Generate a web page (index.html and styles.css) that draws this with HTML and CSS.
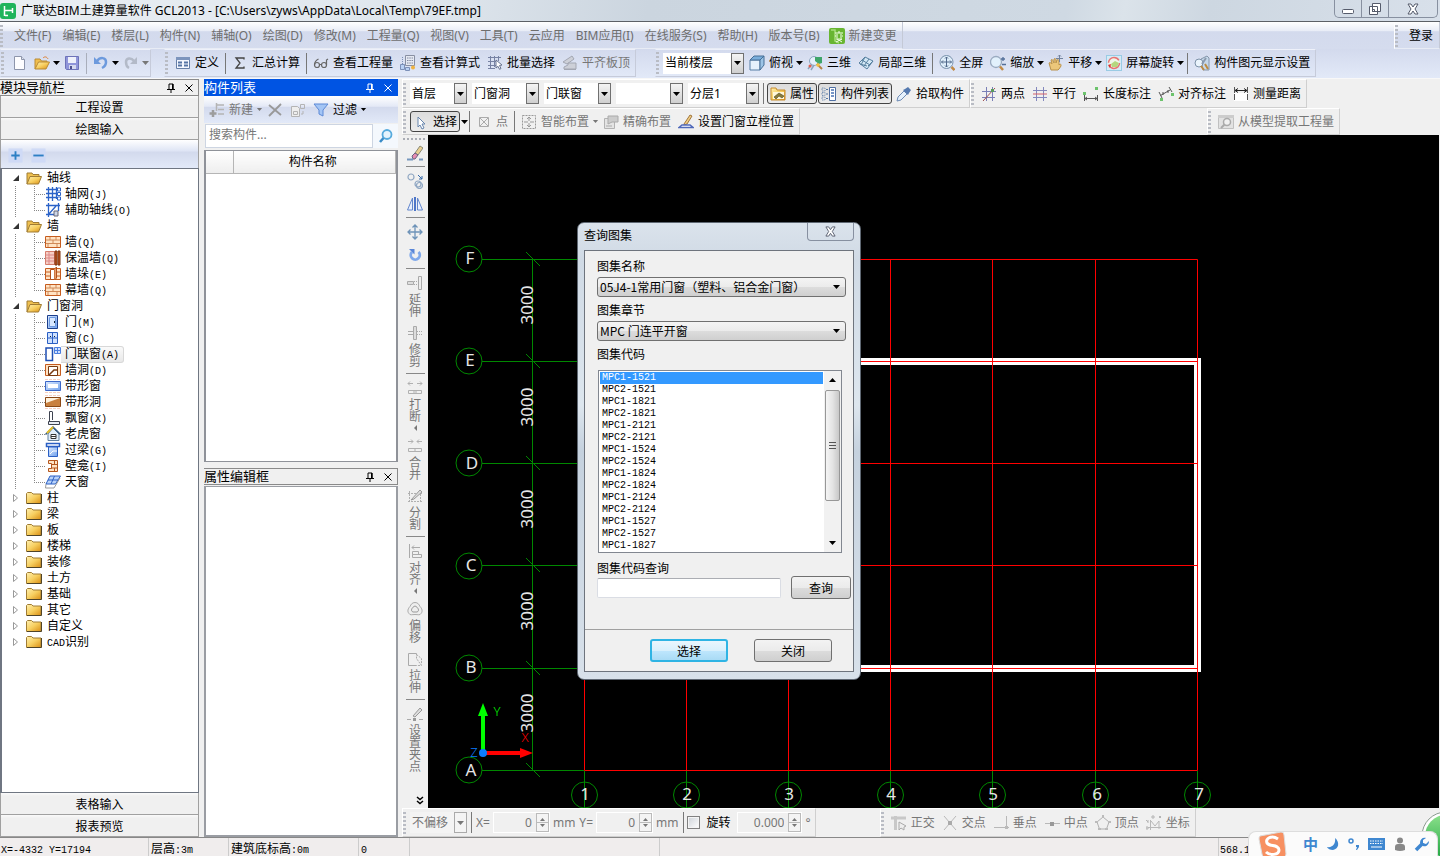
FILE: index.html
```html
<!DOCTYPE html>
<html lang="zh-CN">
<head>
<meta charset="utf-8">
<title>广联达BIM土建算量软件 GCL2013</title>
<link rel="stylesheet" href="styles.css">
</head>
<body>
<svg class="defs" aria-hidden="true">
  <defs>
    <linearGradient id="gold" x1="0" y1="0" x2="1" y2="1"><stop offset="0" stop-color="#fff0b0"/><stop offset=".5" stop-color="#f7cf60"/><stop offset="1" stop-color="#d98e14"/></linearGradient>
    <linearGradient id="blue" x1="0" y1="0" x2="1" y2="1"><stop offset="0" stop-color="#dcebff"/><stop offset="1" stop-color="#6fa0ec"/></linearGradient>
    <linearGradient id="ball" x1="0" y1="0" x2="0" y2="1"><stop offset="0" stop-color="#8be08b"/><stop offset="1" stop-color="#25a845"/></linearGradient>
  </defs>
  <symbol id="caret" viewBox="0 0 7 4"><path d="M0 0h7L3.500 4z" fill="currentColor"/></symbol>
  <symbol id="i-new" viewBox="0 0 16 16"><path d="M3.500 1.500h7l3 3v10h-10z" fill="#fdfdff" stroke="#8d95ab"/><path d="M10.500 1.500v3h3" fill="#dde3f0" stroke="#8d95ab"/></symbol>
  <symbol id="i-open" viewBox="0 0 16 16"><path d="M1 14V4h5l1.500 2H13v3" fill="#f0bf4d" stroke="#b98a35"/><path d="M1 14l3.500-7h11L12 14z" fill="url(#gold)" stroke="#b98a35"/><path d="M9 3c2-2 4-1 5 1" fill="none" stroke="#e08030"/></symbol>
  <symbol id="i-save" viewBox="0 0 16 16"><path d="M1.500 1.500h13v13h-12l-1-1z" fill="#8f95da" stroke="#6d73b8"/><path d="M4 2h8v6H4z" fill="#eef1fb"/><path d="M5 10h7v4H5z" fill="#d5d9ee"/><path d="M6 11h2v3H6z" fill="#4c518f"/></symbol>
  <symbol id="i-undo" viewBox="0 0 16 16"><path d="M4 6c3-4 9-4 9 1 0 3-2 5-4 6" fill="none" stroke="#6d9add" stroke-width="2.500"/><path d="M1 2v7h7z" fill="#6d9add"/></symbol>
  <symbol id="i-redo" viewBox="0 0 16 16"><path d="M11 6C8 2 3 3 3 7c0 3 1 5 3 6" fill="none" stroke="#b3bac8" stroke-width="2.500"/><path d="M14 2v7H7z" fill="#b3bac8"/></symbol>
  <symbol id="i-define" viewBox="0 0 16 16"><path d="M1.500 2.500h13v11h-13z" fill="#f4f7ff" stroke="#6780a8"/><path d="M1 2h14v3H1z" fill="#7d95bd"/><path d="M3 7.500h4M3 10.500h4M9 7.500h4M9 10.500h4" stroke="#5574a5" stroke-width="2"/></symbol>
  <symbol id="i-sum" viewBox="0 0 16 16"><path d="M12 4.500V3H4l4 5-4 5h8v-1.500" fill="none" stroke="#444" stroke-width="1.300"/></symbol>
  <symbol id="i-glasses" viewBox="0 0 16 16"><g fill="none" stroke="#666" stroke-width="1.200"><circle cx="4" cy="10" r="2.500"/><circle cx="11" cy="10" r="2.500"/><path d="M6.500 9.500h2M1.500 10c0-3 2-5 4-6M13.500 10V5l1.500-1"/></g></symbol>
  <symbol id="i-calc" viewBox="0 0 16 16"><path d="M5.500.5h9v10h-9z" fill="#e5e9f2" stroke="#888fa2"/><path d="M7 3h6M7 5.500h6M7 8h6" stroke="#8088a0" stroke-dasharray="1.500 .8"/><path d="M2.500 2v7" stroke="#7c90b8" stroke-dasharray="1 1"/><path d="M.5 9.500h4v5h-4zM5.500 12.500h4v3h-4z" fill="#b9d1f4" stroke="#7c90b8"/><circle cx="13" cy="12.500" r="2" fill="#efb342"/></symbol>
  <symbol id="i-batch" viewBox="0 0 16 16"><path d="M1 2.500h13M1 6.500h9M1 10.500h8M3.500 1v12M7.500 1v11M1 13.500h7M11.500 1v5" fill="none" stroke="#7782a3"/><path d="M9 5l6 5-2.500.5 1.500 3-1.500.8-1.500-3L9 13z" fill="#fff" stroke="#687390"/></symbol>
  <symbol id="i-flush" viewBox="0 0 16 16"><path d="M2 14.500h12M2 12l4-2V8h8v6H2zM1 7l9-6 2 3-7 5z" fill="#cdd0d8" stroke="#a3a7b2"/></symbol>
  <symbol id="i-cube" viewBox="0 0 16 16"><path d="M1 5h10v10H1z" fill="#e6f2fc" stroke="#567fa5"/><path d="M1 5l4-4h10l-4 4z" fill="#7aaedb" stroke="#466f96"/><path d="M11 5l4-4v9l-4 5z" fill="#9cc4e6" stroke="#466f96"/></symbol>
  <symbol id="i-orbit" viewBox="0 0 16 16"><circle cx="7" cy="6" r="4.500" fill="#e4f0fa" stroke="#8ba4bd"/><path d="M8 2h7v6l-3 1-4-3z" fill="#3fa56a"/><path d="M10 9l5 5" stroke="#b48345" stroke-width="2"/><path d="M1 14l4-5M4 15l3-5" stroke="#8ba4bd" stroke-width="1.500"/><circle cx="3" cy="11" r="1.500" fill="#e06050"/><circle cx="11" cy="10" r="1.800" fill="#f0c03d"/></symbol>
  <symbol id="i-local3d" viewBox="0 0 16 16"><path d="M1 8l6-6 8 4-6 8z" fill="#d4e8f6" stroke="#57809f"/><path d="M4 5l8 5M7 2L3 10M11 4l-5 7M15 6l-5 5M2 9l7 2" fill="none" stroke="#57809f"/></symbol>
  <symbol id="i-full" viewBox="0 0 16 16"><circle cx="7.500" cy="7" r="6.500" fill="#dfeefa" stroke="#7890aa"/><path d="M7.500 2v10M2.500 7h10M6 3.500L7.500 2 9 3.500M6 10.500L7.500 12 9 10.500M4 5.500L2.500 7 4 8.500M11 5.500L12.500 7 11 8.500" fill="none" stroke="#50688a"/><path d="M12.500 12l3 3" stroke="#c18a45" stroke-width="2.500"/></symbol>
  <symbol id="i-zoom" viewBox="0 0 16 16"><circle cx="6" cy="7" r="5.500" fill="#e2f1fc" stroke="#9aabc0" stroke-width="1.300"/><path d="M10 11.500l3 3.500" stroke="#c18a45" stroke-width="2.500"/><path d="M11 4h4M13 2v4M12 9.500h4" stroke="#536f99" stroke-width="1.300"/></symbol>
  <symbol id="i-hand" viewBox="0 0 16 16"><path d="M3 15L1 8c1-1 2 0 3 1L3 5c1-1 2 0 2 1l1 2V4c1-1 2 0 2 1v3l1-3c1-1 2 0 2 1v4l1-1c1 0 1 1 1 2l-2 3-1 1z" fill="#ecc77a" stroke="#b9924c"/><path d="M11.500 0v7M8 3.500h7M10 1.500L11.500 0 13 1.500" fill="none" stroke="#72839f"/></symbol>
  <symbol id="i-rotscr" viewBox="0 0 16 16"><rect x=".5" y=".5" width="15" height="15" fill="#d5ebf6" stroke="#9acbe4"/><circle cx="8" cy="8" r="5.500" fill="#eff6ea" stroke="#e87474" stroke-width="1.500" stroke-dasharray="14 3"/><path d="M5 9l4-3 4 2-2 4H6z" fill="#b5d77f"/><path d="M2 10l3-1-1 4z" fill="#d33"/></symbol>
  <symbol id="i-display" viewBox="0 0 16 16"><path d="M7 4l6-3 2 2v12H9z" fill="#c6d8ea" stroke="#8596aa"/><circle cx="5" cy="8" r="4" fill="#eaf4fc" stroke="#7d91a8"/><path d="M12 3L8 9" stroke="#8b9aae" stroke-width="2"/><path d="M7 11l3 4M11 9l3 5" stroke="#bd8b40" stroke-width="2"/></symbol>
  <symbol id="i-change" viewBox="0 0 16 16"><rect width="16" height="16" rx="2" fill="#68b532"/><path d="M2 2h4v11l4 2" fill="none" stroke="#a7dd7c" stroke-width="1.500"/><path d="M6 5h8M10 3v2M8 6v4M12 6v4M6 8h1M13 8h1M7 11h6l-6 3M8 11l5 3" fill="none" stroke="#f3ffe9"/></symbol>
  <symbol id="i-prop" viewBox="0 0 16 16"><path d="M1 14V2h5l1 2h8v10z" fill="url(#gold)" stroke="#c68a2c"/><path d="M3 6h11v7H3z" fill="#fff7d9"/><path d="M4 11l5-4 5 3-2 2-3-2-3 3z" fill="#8b7b36" stroke="#4b4b2b" stroke-width=".6"/></symbol>
  <symbol id="i-list" viewBox="0 0 16 16"><path d="M1 2h3v3H1zM1 6.500h3v3H1zM1 11h3v3H1z" fill="none" stroke="#7a94b5" stroke-dasharray="1.500 1"/><path d="M5 3.500h2M5 8h2M5 12.500h2" stroke="#53759f"/><path d="M8.500 1.500h6v13h-6z" fill="#fff" stroke="#4f6fa2"/><path d="M10 4h3M10 7h3M10 10h3" stroke="#4973b4" stroke-width="1.500"/></symbol>
  <symbol id="i-pick" viewBox="0 0 16 16"><path d="M1 15l1-4 6-6 3 3-6 6z" fill="#e5f0fb" stroke="#6d8bb5"/><path d="M7 4l5 5 1-2 2-3-3-3-3 2z" fill="#5579af"/></symbol>
  <symbol id="i-twopt" viewBox="0 0 16 16"><path d="M1 5.500h14M1 11.500h13M5.500 1v14M11.500 1v14" stroke="#7a7fb6"/><path d="M2 15L14 2" stroke="#a05050"/><path d="M10 3h3v3h-3z" fill="#5a9a5a"/></symbol>
  <symbol id="i-parallel" viewBox="0 0 16 16"><path d="M1 4.500h14M1 11.500h14M4.500 1v14M11.500 1v14" stroke="#8488bd"/><path d="M1 8h14" stroke="#d2606a"/></symbol>
  <symbol id="i-length" viewBox="0 0 16 16"><path d="M1.500 9v6M14.500 9v6M2 12.500h12M4 11l-2 1.500L4 14M12 11l2 1.500-2 1.500" fill="none" stroke="#555"/><path d="M0 6h3v3H0zM12 1h3v3h-3z" fill="#6cc36c"/></symbol>
  <symbol id="i-align" viewBox="0 0 16 16"><path d="M1 6l3 6M11 1l3 5M2.500 9.500L12 4M5 6v3M10 4v3" fill="none" stroke="#555"/><path d="M2 12h3v3H2zM13 7h3v3h-3z" fill="#6cc36c"/></symbol>
  <symbol id="i-measure" viewBox="0 0 16 16"><path d="M1 7h14v8H1z" fill="#fff"/><path d="M1.500 1v14M14.500 1v14" stroke="#555" stroke-dasharray="6 1"/><path d="M2 4.500h12M5 2.500l-3 2 3 2M11 2.500l3 2-3 2" fill="none" stroke="#222"/></symbol>
  <symbol id="i-cursor" viewBox="0 0 16 16"><path d="M5 3v10l2-2 2 4 2-1-2-4h3z" fill="#fff" stroke="#6685ad"/></symbol>
  <symbol id="i-point" viewBox="0 0 16 16"><path d="M3.500 3.500h9v9h-9zM4 4l8 8M12 4l-8 8" fill="none" stroke="#aaa"/></symbol>
  <symbol id="i-smart" viewBox="0 0 16 16"><rect x="1.500" y="1.500" width="13" height="13" fill="none" stroke="#999" stroke-dasharray="2 1"/><path d="M8 3v4M8 9v4M3 8h4M9 8h4M6 5l2-2 2 2M6 11l2 2 2-2" fill="none" stroke="#999"/></symbol>
  <symbol id="i-exact" viewBox="0 0 16 16"><path d="M1.500 4.500h10v10h-10z" fill="#e4e4e4" stroke="#b2b2b2"/><path d="M5 2h10v6H9L5 10z" fill="#ccc" stroke="#aaa"/><path d="M3 12h6" stroke="#aaa"/></symbol>
  <symbol id="i-pen" viewBox="0 0 16 16"><path d="M6 10L12 1l2 1-5 8-3 1z" fill="#f1cf83" stroke="#a0743c"/><path d="M1 13.500L4 11h8l3 2.500z" fill="#fff" stroke="#4f69ba" stroke-width="1.500"/></symbol>
  <symbol id="i-extract" viewBox="0 0 16 16"><path d="M.5 1.500h15v13H.5z" fill="#e2e2e2" stroke="#c0c0c0"/><path d="M0 1h16v3H0z" fill="#ccc"/><circle cx="9" cy="8" r="3.500" fill="#f0f0f0" stroke="#aaa" stroke-width="1.500"/><path d="M6.500 10.500L3 14" stroke="#aaa" stroke-width="2"/></symbol>
  <symbol id="i-plus" viewBox="0 0 16 16"><path d="M.5.5h15v15H.5z" fill="#cfdaf6"/><path d="M8 3.500v9M3.500 8h9" stroke="#2d7fc4" stroke-width="2"/></symbol>
  <symbol id="i-minus" viewBox="0 0 16 16"><path d="M.5.5h15v15H.5z" fill="#cfdaf6"/><path d="M2.500 8h11" stroke="#2d7fc4" stroke-width="2"/></symbol>
  <symbol id="i-add" viewBox="0 0 16 16"><path d="M7 3h8M9 7.500h6M9 12h6M7.500 1v8" stroke="#b4b4b4" stroke-width="1.500"/><path d="M4 8v7M.5 11.500h7" stroke="#9d9d9d" stroke-width="2.500"/></symbol>
  <symbol id="i-del" viewBox="0 0 16 16"><path d="M2 3l12 10M14 2L2 14" stroke="#999" stroke-width="1.800"/></symbol>
  <symbol id="i-copy" viewBox="0 0 16 16"><path d="M1.500 4.500h6l2 2v8h-8z" fill="#eee" stroke="#b4b4b4"/><path d="M3.500 9.500h4v3h-4zM10.500 2.500h4v4h-4zM13 9v3h-2" fill="none" stroke="#b4b4b4"/></symbol>
  <symbol id="i-filter" viewBox="0 0 16 16"><path d="M1 2h14L10 8v6l-4-2V8z" fill="#a3c5f5" stroke="#5c89d6"/></symbol>
  <symbol id="i-search" viewBox="0 0 16 16"><circle cx="9" cy="6.500" r="4.500" fill="#e4f3fd" stroke="#55aadd" stroke-width="1.800"/><path d="M5.500 10L2 14" stroke="#3a8cc8" stroke-width="2.500"/></symbol>
  <symbol id="i-pin" viewBox="0 0 10 10"><path d="M3 1h4v5M3 1v5M1 6.500h8M5 7v3" fill="none" stroke="currentColor"/><path d="M6 1h1.500v5H6z" fill="currentColor"/></symbol>
  <symbol id="i-x" viewBox="0 0 10 10"><path d="M1.500 1.500l7 7M8.500 1.500l-7 7" stroke="currentColor" fill="none"/></symbol>
  <symbol id="i-exp" viewBox="0 0 8 8"><path d="M7 1v6H1z" fill="#333"/></symbol>
  <symbol id="i-col" viewBox="0 0 8 8"><path d="M1.500.5v7l4-3.500z" fill="#fff" stroke="#999"/></symbol>
  <symbol id="i-fopen" viewBox="0 0 16 14"><path d="M1 13V2h5l1 1.500h6V7" fill="#efc04f" stroke="#a07c34"/><path d="M1 13l3-7.500h11.500L12.500 13z" fill="url(#gold)" stroke="#a07c34"/></symbol>
  <symbol id="i-fold" viewBox="0 0 16 14"><path d="M.5 12.500v-10l1-1h4l1.500 1.500h8v9.500z" fill="url(#gold)" stroke="#a07c34"/><path d="M15.500 3v9.500H1" fill="none" stroke="#504428"/></symbol>
  <symbol id="t-grid" viewBox="0 0 16 16"><path d="M1 3.500h10M1 7.500h10M1 11.500h10M3.500 1v14M7.500 1v14M11.500 1v12" stroke="#2a62c8" stroke-width="1.300"/><path d="M12.500 2h3v3h-3zM12.500 6.500h3v3h-3zM12.500 11h3v3h-3z" fill="#fff" stroke="#2a62c8"/></symbol>
  <symbol id="t-aux" viewBox="0 0 16 16"><path d="M1 3.500h14M1 12.500h9M3.500 1v14M13.500 1v8M3 13l8-9" stroke="#2a62c8" stroke-width="1.300"/><path d="M9 9h4v5H9z" fill="#ccd6e8" stroke="#667"/></symbol>
  <symbol id="t-wall" viewBox="0 0 16 16"><path d="M.5 2.500h15v11H.5z" fill="#ffe3c4" stroke="#c65c1e"/><path d="M1 6h14M1 9.500h14M5 3v3M11 3v3M8 6v4M3 10v3M12 10v3" stroke="#d08a58"/></symbol>
  <symbol id="t-ins" viewBox="0 0 16 16"><path d="M.5 1.500h9v13h-9z" fill="#f6cfc6" stroke="#d67d6d"/><path d="M1 5h8M1 8h8M1 11h8M4 2v12" stroke="#d88"/><path d="M10 1h2v14h-2zM13 1h2v14h-2z" fill="#c55820" stroke="#7d3410"/></symbol>
  <symbol id="t-pier" viewBox="0 0 16 16"><path d="M.5 2.500h15v11H.5zM1 6h14M1 10h14" fill="#ffe3c4" stroke="#c65c1e"/><path d="M5.500 3.500h4v10h-4z" fill="#fff" stroke="#b14f1a"/><path d="M9.500 3l2-2v11l-2 2" fill="#e89f6c" stroke="#b14f1a"/></symbol>
  <symbol id="t-door" viewBox="0 0 16 16"><path d="M2.500 1.500h10v13h-10z" fill="url(#blue)" stroke="#1b3e8c"/><path d="M4.500 3.500h6v9h-6z" fill="#d8e8ff" stroke="#6c98e0"/><path d="M9.500 7v2" stroke="#123"/></symbol>
  <symbol id="t-win" viewBox="0 0 16 16"><path d="M2.500 2.500h10v11h-10zM7.500 3v10M3 8h10" fill="#cfe2ff" stroke="#2a5fc4"/><path d="M5 6.500h1M9 6.500h1" stroke="#123"/></symbol>
  <symbol id="t-dw" viewBox="0 0 16 16"><path d="M1 2h6.500v12.500H1z" fill="#fff" stroke="#1f4fb4" stroke-width="1.500"/><path d="M9.500 1.500h6v6h-6zM12.500 2v5M10 4.500h5" fill="#cfe0ff" stroke="#4a7fe0"/></symbol>
  <symbol id="t-hole" viewBox="0 0 16 16"><path d="M.5 2.500h15v11H.5z" fill="#ffe3c4" stroke="#c65c1e"/><path d="M3.500 4.500h9v9h-9z" fill="#fff" stroke="#7a3a10"/><path d="M4 13l5-5 3 0" fill="none" stroke="#7a3a10" stroke-width="1.500"/></symbol>
  <symbol id="t-band" viewBox="0 0 16 16"><path d="M.5 3.500h15v9H.5z" fill="url(#blue)" stroke="#3c68c8"/><path d="M3 6h10v4H3z" fill="#fff"/><path d="M0 1.500h16M0 14.500h16" stroke="#f8cfc0" stroke-dasharray="3 1"/></symbol>
  <symbol id="t-bandh" viewBox="0 0 16 16"><path d="M.5 3.500h15v9H.5z" fill="#c9803f" stroke="#8a4816"/><path d="M1 9l14-5H1z" fill="#fff2dd"/><path d="M0 1.500h16M0 14.500h16" stroke="#f8cfc0" stroke-dasharray="3 1"/></symbol>
  <symbol id="t-bay" viewBox="0 0 16 16"><path d="M7.500 1.500h-3v10M7.500 2v8" fill="none" stroke="#3e4350"/><path d="M3.500 11.500h11v3h-11z" fill="#e9edf4" stroke="#3e4350"/></symbol>
  <symbol id="t-dormer" viewBox="0 0 16 16"><path d="M3 8v6.500h11V8L8 2z" fill="#e2eefa" stroke="#5f7f9f"/><path d="M.5 8.500L8 1l7.500 7.500" fill="none" stroke="#375b80" stroke-width="1.500"/><path d="M2 7l6-6" stroke="#e4bd28" stroke-width="2"/><path d="M6 8.500h5v4H6zM6 10.500h5" fill="#fff" stroke="#333"/></symbol>
  <symbol id="t-lintel" viewBox="0 0 16 16"><path d="M1.500 1.500h13v3h-13z" fill="#fff" stroke="#2a5fc4" stroke-width="1.500"/><path d="M3.500 5h9v9.500h-9z" fill="url(#blue)" stroke="#2a5fc4"/><path d="M5 12l3-3h4" fill="none" stroke="#fff"/></symbol>
  <symbol id="t-niche" viewBox="0 0 16 16"><path d="M3.500 2.500h9v11h-9v-3h3v-5h-3zM9.500 3v3M6 6.500h7M6 10h7M9.500 10v3" fill="#ffe3c4" stroke="#b4551c"/></symbol>
  <symbol id="t-sky" viewBox="0 0 16 16"><path d="M5 2h10.500l-5 8H1z" fill="#b9d3fa" stroke="#2a5fc4"/><path d="M9.500 2L6 10M3 6h10" stroke="#2a5fc4"/><path d="M1 10l-.5 4H9l6-10" fill="none" stroke="#999"/></symbol>
  <symbol id="v-erase" viewBox="0 0 16 16"><path d="M8 8l5-7 3 2-5 7z" fill="#e9cf90" stroke="#8a8a75"/><path d="M5 11l3-3 3 2-3 4H6z" fill="#e68cb0" stroke="#6b6180"/><path d="M0 14.500h6M12 14.500h4" stroke="#7697be" stroke-width="2"/></symbol>
  <symbol id="v-copy" viewBox="0 0 16 16"><g fill="none" stroke="#8fa6c2" stroke-width="1.200"><circle cx="4" cy="4" r="3"/><circle cx="11" cy="11" r="3"/><circle cx="12.500" cy="12.500" r="3"/></g><path d="M11 2l4 4M15 3v3h-3" fill="none" stroke="#3468a8"/></symbol>
  <symbol id="v-mirror" viewBox="0 0 16 16"><path d="M5.500 2v12h-5zM10.500 2v12h5z" fill="#e8f0ff" stroke="#6286cc"/><path d="M7.500 1v14M8.500 1v14" stroke="#4e76c8"/></symbol>
  <symbol id="v-move" viewBox="0 0 16 16"><path d="M8 1.500v13M1.500 8h13M5.500 3.500L8 1l2.500 2.500M5.500 12.500L8 15l2.500-2.500M3.500 5.500L1 8l2.500 2.500M12.500 5.500L15 8l-2.500 2.500" fill="none" stroke="#6e93b8" stroke-width="1.300"/></symbol>
  <symbol id="v-rotate" viewBox="0 0 16 16"><path d="M5 5a4.500 4.500 0 1 0 6.500 0" fill="none" stroke="#7fa8ea" stroke-width="2.800"/><path d="M2 2h5.500v5.500z" fill="#5986d8"/></symbol>
  <symbol id="v-extend" viewBox="0 0 16 16"><path d="M.5 6.500h6v3h-6z" fill="#ddd" stroke="#aaa"/><path d="M7 6.500h4M7 9.500h4" stroke="#aaa" stroke-dasharray="1 1"/><path d="M11.500 1.500h3v13h-3z" fill="#eee" stroke="#aaa"/></symbol>
  <symbol id="v-trim" viewBox="0 0 16 16"><path d="M1 6.500h6M1 9.500h6" stroke="#aaa"/><path d="M10 6.500h5M10 9.500h5" stroke="#aaa" stroke-dasharray="1 1"/><path d="M6.500 1.500h3v13h-3z" fill="#ddd" stroke="#aaa"/></symbol>
  <symbol id="v-break" viewBox="0 0 16 16"><path d="M1 3.500h5M3 1.500l-2 2 2 2M10 3.500h5M13 1.500l2 2-2 2M1.500 10.500h13v3h-13zM7 10v4M9 10v4" fill="none" stroke="#b0b0b0"/></symbol>
  <symbol id="v-merge" viewBox="0 0 16 16"><path d="M1 3.500h5M4 1.500l2 2-2 2M10 3.500h5M12 1.500l-2 2 2 2M1.500 10.500h13v3h-13zM8 10v4" fill="none" stroke="#b0b0b0"/></symbol>
  <symbol id="v-split" viewBox="0 0 16 16"><path d="M1 5.500h14M1 13.500h14M2.500 3v12M13.500 3v12" stroke="#b0b0b0" stroke-dasharray="2 1"/><path d="M4 12L13 2l2 2-8 7z" fill="#ddd" stroke="#999"/></symbol>
  <symbol id="v-align" viewBox="0 0 16 16"><path d="M2.500 1v14M5 4.500h8M7 2.500l-2 2 2 2M5.500 8.500h6v3h-6zM5.500 11.500h9v3h-9z" fill="none" stroke="#aaa"/></symbol>
  <symbol id="v-offset" viewBox="0 0 16 16"><path d="M8 1.500c3 0 4 2 5 4 2 2 3 5 1 7-1 2-3 1-6 1s-5 1-6-1c-2-2-1-5 1-7 1-2 2-4 5-4z" fill="#eee" stroke="#aaa"/><path d="M8 5c3 1 5 5 2 6H6C3 10 5 6 8 5z" fill="none" stroke="#999"/></symbol>
  <symbol id="v-stretch" viewBox="0 0 16 16"><path d="M9.500 2.500h-8v12h8" fill="none" stroke="#aaa"/><path d="M9.500 2.500v5l5 7h-5M9.500 3.500l5 4v6" fill="none" stroke="#aaa" stroke-dasharray="2 1"/></symbol>
  <symbol id="v-grip" viewBox="0 0 16 16"><path d="M6 10l7-8 2 2-7 7z" fill="#ddd" stroke="#999"/><path d="M0 13.500h4M12 13.500h4" stroke="#aaa"/><path d="M6 12h3v3H6z" fill="#999"/></symbol>
  <symbol id="s-ortho" viewBox="0 0 16 16"><path d="M0 3h15M4.500 1v14" stroke="#c8c8c8" stroke-width="3"/><path d="M8 7v8l2-2 3 2 0-3 2-1z" fill="#eee" stroke="#aaa"/></symbol>
  <symbol id="s-cross" viewBox="0 0 16 16"><path d="M2 1l12 14M14 1L2 15" stroke="#b8b8b8"/><path d="M6 6h4v4H6z" fill="#aaa"/></symbol>
  <symbol id="s-perp" viewBox="0 0 16 16"><path d="M1 12.500h15M13.500 1v13" stroke="#b8b8b8"/><path d="M12 11h3v3h-3z" fill="#bbb"/></symbol>
  <symbol id="s-mid" viewBox="0 0 16 16"><path d="M1 8.500h15" stroke="#b8b8b8"/><path d="M6 7h4v4H6z" fill="#999"/></symbol>
  <symbol id="s-vert" viewBox="0 0 16 16"><path d="M8 2l6 5-2.500 7h-7L2 7z" fill="none" stroke="#b0b0b0"/><path d="M7 0h2v3H7zM0 6h3v2H0zM13 6h3v2h-3zM3 13h3v2H3zM10 13h3v2h-3z" fill="#bbb"/></symbol>
  <symbol id="s-coord" viewBox="0 0 16 16"><path d="M4.500 5v10M2 12.500h13M5 6l4 5 4-5v8" fill="none" stroke="#b8b8b8"/><path d="M0 5l2 2M2 5v3M0 12h2v2H0zM6 1h2v2H6zM13 1l2 2M15 1l-2 2" fill="none" stroke="#b4b4b4"/></symbol>
</svg>

<div class="app">
  <header class="titlebar">
    <svg class="logo" viewBox="0 0 16 16"><rect width="16" height="16" rx="3" fill="#1fb45c"/><path d="M4.500 3v10M5 7.500h7M5 12.500h3M12.500 5v5" fill="none" stroke="#fff" stroke-width="1.500"/></svg>
    <h1>广联达BIM土建算量软件 GCL2013 - [C:\Users\zyws\AppData\Local\Temp\79EF.tmp]</h1>
    <div class="winbtns">
      <button type="button" aria-label="最小化"><svg viewBox="0 0 14 14" width="14" height="14"><rect x="1.500" y="7.500" width="11" height="4" rx="1" fill="#fff" stroke="#555b6b"/></svg></button>
      <button type="button" aria-label="还原"><svg viewBox="0 0 14 14" width="14" height="14"><path d="M4.500 1.500h8v8h-8zM1.500 4.500h8v8h-8z" fill="#fff" stroke="#555b6b"/><path d="M4.500 7.500h2v2h-2z" fill="none" stroke="#555b6b"/></svg></button>
      <button type="button" aria-label="关闭" class="wide"><svg viewBox="0 0 14 12" width="14" height="12"><path d="M2 1h3l2 3 2-3h3L9 6l3 5H9L7 8l-2 3H2l3-5z" fill="#fff" stroke="#555b6b"/></svg></button>
    </div>
  </header>

  <nav class="menurow">
    <div class="menubar">
      <i class="handle"></i>
      <button type="button">文件(F)</button><button type="button">编辑(E)</button><button type="button">楼层(L)</button><button type="button">构件(N)</button><button type="button">辅轴(O)</button><button type="button">绘图(D)</button><button type="button">修改(M)</button><button type="button">工程量(Q)</button><button type="button">视图(V)</button><button type="button">工具(T)</button><button type="button">云应用</button><button type="button">BIM应用(I)</button><button type="button">在线服务(S)</button><button type="button">帮助(H)</button><button type="button">版本号(B)</button><button type="button" class="tool"><svg class="ic"><use href="#i-change"/></svg>新建变更</button>
    </div>
    <div class="menubar login"><i class="handle"></i><button type="button">登录</button></div>
  </nav>

  <div class="toolrow">
    <div class="tbar files">
      <i class="handle"></i>
      <button type="button" class="tool" aria-label="新建"><svg class="ic"><use href="#i-new"/></svg></button>
      <button type="button" class="tool drop" aria-label="打开"><svg class="ic"><use href="#i-open"/></svg><svg class="caret"><use href="#caret"/></svg></button>
      <button type="button" class="tool" aria-label="保存"><svg class="ic"><use href="#i-save"/></svg></button>
      <i class="sep light"></i>
      <button type="button" class="tool drop" aria-label="撤销"><svg class="ic"><use href="#i-undo"/></svg><svg class="caret"><use href="#caret"/></svg></button>
      <button type="button" class="tool drop off" aria-label="恢复"><svg class="ic"><use href="#i-redo"/></svg><svg class="caret"><use href="#caret"/></svg></button>
    </div>
    <div class="tbar calc">
      <i class="handle"></i>
      <button type="button" class="tool"><svg class="ic"><use href="#i-define"/></svg>定义</button>
      <i class="sep"></i>
      <button type="button" class="tool"><svg class="ic"><use href="#i-sum"/></svg>汇总计算</button>
      <i class="sep"></i>
      <button type="button" class="tool"><svg class="ic"><use href="#i-glasses"/></svg>查看工程量</button>
      <button type="button" class="tool"><svg class="ic"><use href="#i-calc"/></svg>查看计算式</button>
      <button type="button" class="tool"><svg class="ic"><use href="#i-batch"/></svg>批量选择</button>
      <button type="button" class="tool off"><svg class="ic"><use href="#i-flush"/></svg>平齐板顶</button>
    </div>
    <div class="tbar views">
      <i class="handle"></i>
      <div class="combos"><span class="combo floor"><select aria-label="楼层范围"><option>当前楼层</option></select><b><svg class="caret"><use href="#caret"/></svg></b></span></div>
      <button type="button" class="tool drop"><svg class="ic"><use href="#i-cube"/></svg>俯视<svg class="caret"><use href="#caret"/></svg></button>
      <button type="button" class="tool"><svg class="ic"><use href="#i-orbit"/></svg>三维</button>
      <button type="button" class="tool"><svg class="ic"><use href="#i-local3d"/></svg>局部三维</button>
      <i class="sep"></i>
      <button type="button" class="tool"><svg class="ic"><use href="#i-full"/></svg>全屏</button>
      <button type="button" class="tool drop"><svg class="ic"><use href="#i-zoom"/></svg>缩放<svg class="caret"><use href="#caret"/></svg></button>
      <button type="button" class="tool drop"><svg class="ic"><use href="#i-hand"/></svg>平移<svg class="caret"><use href="#caret"/></svg></button>
      <button type="button" class="tool drop"><svg class="ic"><use href="#i-rotscr"/></svg>屏幕旋转<svg class="caret"><use href="#caret"/></svg></button>
      <i class="sep"></i>
      <button type="button" class="tool"><svg class="ic"><use href="#i-display"/></svg>构件图元显示设置</button>
    </div>
  </div>

  <main class="body">
    <aside class="navpane">
      <div class="cap"><h2>模块导航栏</h2><button type="button" aria-label="固定"><svg><use href="#i-pin"/></svg></button><button type="button" aria-label="关闭"><svg><use href="#i-x"/></svg></button></div>
      <button type="button" class="section">工程设置</button>
      <button type="button" class="section">绘图输入</button>
      <div class="treebar"><button type="button" aria-label="展开"><svg class="ic"><use href="#i-plus"/></svg></button><button type="button" aria-label="折叠"><svg class="ic"><use href="#i-minus"/></svg></button></div>
      <ul class="tree">
        <li><div class="node"><svg class="tw"><use href="#i-exp"/></svg><svg class="fd"><use href="#i-fopen"/></svg>轴线</div>
          <ul>
            <li><svg class="ic"><use href="#t-grid"/></svg><span>轴网<kbd>(J)</kbd></span></li>
            <li><svg class="ic"><use href="#t-aux"/></svg><span>辅助轴线<kbd>(O)</kbd></span></li>
          </ul></li>
        <li><div class="node"><svg class="tw"><use href="#i-exp"/></svg><svg class="fd"><use href="#i-fopen"/></svg>墙</div>
          <ul>
            <li><svg class="ic"><use href="#t-wall"/></svg><span>墙<kbd>(Q)</kbd></span></li>
            <li><svg class="ic"><use href="#t-ins"/></svg><span>保温墙<kbd>(Q)</kbd></span></li>
            <li><svg class="ic"><use href="#t-pier"/></svg><span>墙垛<kbd>(E)</kbd></span></li>
            <li><svg class="ic"><use href="#t-wall"/></svg><span>幕墙<kbd>(Q)</kbd></span></li>
          </ul></li>
        <li><div class="node"><svg class="tw"><use href="#i-exp"/></svg><svg class="fd"><use href="#i-fopen"/></svg>门窗洞</div>
          <ul>
            <li><svg class="ic"><use href="#t-door"/></svg><span>门<kbd>(M)</kbd></span></li>
            <li><svg class="ic"><use href="#t-win"/></svg><span>窗<kbd>(C)</kbd></span></li>
            <li class="picked"><svg class="ic"><use href="#t-dw"/></svg><span>门联窗<kbd>(A)</kbd></span></li>
            <li><svg class="ic"><use href="#t-hole"/></svg><span>墙洞<kbd>(D)</kbd></span></li>
            <li><svg class="ic"><use href="#t-band"/></svg><span>带形窗</span></li>
            <li><svg class="ic"><use href="#t-bandh"/></svg><span>带形洞</span></li>
            <li><svg class="ic"><use href="#t-bay"/></svg><span>飘窗<kbd>(X)</kbd></span></li>
            <li><svg class="ic"><use href="#t-dormer"/></svg><span>老虎窗</span></li>
            <li><svg class="ic"><use href="#t-lintel"/></svg><span>过梁<kbd>(G)</kbd></span></li>
            <li><svg class="ic"><use href="#t-niche"/></svg><span>壁龛<kbd>(I)</kbd></span></li>
            <li><svg class="ic"><use href="#t-sky"/></svg><span>天窗</span></li>
          </ul></li>
        <li><div class="node"><svg class="tw"><use href="#i-col"/></svg><svg class="fd"><use href="#i-fold"/></svg>柱</div></li>
        <li><div class="node"><svg class="tw"><use href="#i-col"/></svg><svg class="fd"><use href="#i-fold"/></svg>梁</div></li>
        <li><div class="node"><svg class="tw"><use href="#i-col"/></svg><svg class="fd"><use href="#i-fold"/></svg>板</div></li>
        <li><div class="node"><svg class="tw"><use href="#i-col"/></svg><svg class="fd"><use href="#i-fold"/></svg>楼梯</div></li>
        <li><div class="node"><svg class="tw"><use href="#i-col"/></svg><svg class="fd"><use href="#i-fold"/></svg>装修</div></li>
        <li><div class="node"><svg class="tw"><use href="#i-col"/></svg><svg class="fd"><use href="#i-fold"/></svg>土方</div></li>
        <li><div class="node"><svg class="tw"><use href="#i-col"/></svg><svg class="fd"><use href="#i-fold"/></svg>基础</div></li>
        <li><div class="node"><svg class="tw"><use href="#i-col"/></svg><svg class="fd"><use href="#i-fold"/></svg>其它</div></li>
        <li><div class="node"><svg class="tw"><use href="#i-col"/></svg><svg class="fd"><use href="#i-fold"/></svg>自定义</div></li>
        <li><div class="node"><svg class="tw"><use href="#i-col"/></svg><svg class="fd"><use href="#i-fold"/></svg><span><kbd>CAD</kbd>识别</span></div></li>
      </ul>
      <button type="button" class="section">表格输入</button>
      <button type="button" class="section">报表预览</button>
    </aside>

    <aside class="listpane">
      <div class="cap active"><h2>构件列表</h2><button type="button" aria-label="固定"><svg><use href="#i-pin"/></svg></button><button type="button" aria-label="关闭"><svg><use href="#i-x"/></svg></button></div>
      <div class="listbar">
        <button type="button" class="tool off drop"><svg class="ic"><use href="#i-add"/></svg>新建<svg class="caret small"><use href="#caret"/></svg></button>
        <button type="button" class="tool" aria-label="删除"><svg class="ic"><use href="#i-del"/></svg></button>
        <button type="button" class="tool" aria-label="复制"><svg class="ic"><use href="#i-copy"/></svg></button>
        <button type="button" class="tool drop"><svg class="ic"><use href="#i-filter"/></svg>过滤<svg class="caret small"><use href="#caret"/></svg></button>
      </div>
      <div class="search"><input type="text" placeholder="搜索构件..." aria-label="搜索构件"><button type="button" aria-label="搜索"><svg class="ic"><use href="#i-search"/></svg></button></div>
      <div class="listbox"><table><thead><tr><th class="idx"></th><th>构件名称</th></tr></thead></table></div>
      <div class="cap"><h2>属性编辑框</h2><button type="button" aria-label="固定"><svg><use href="#i-pin"/></svg></button><button type="button" aria-label="关闭"><svg><use href="#i-x"/></svg></button></div>
      <div class="props"></div>
    </aside>

    <section class="work">
      <div class="row one">
        <div class="tbar">
          <i class="handle"></i>
          <div class="combos">
            <span class="combo short"><select aria-label="楼层"><option>首层</option></select><b><svg class="caret"><use href="#caret"/></svg></b></span>
            <span class="combo"><select aria-label="构件类别"><option>门窗洞</option></select><b><svg class="caret"><use href="#caret"/></svg></b></span>
            <span class="combo"><select aria-label="构件类型"><option>门联窗</option></select><b><svg class="caret"><use href="#caret"/></svg></b></span>
            <span class="combo"><select aria-label="构件"><option></option></select><b><svg class="caret"><use href="#caret"/></svg></b></span>
            <span class="combo layer"><select aria-label="分层"><option>分层1</option></select><b><svg class="caret"><use href="#caret"/></svg></b></span>
          </div>
          <i class="sep"></i>
          <button type="button" class="tool on"><svg class="ic"><use href="#i-prop"/></svg>属性</button>
          <button type="button" class="tool on"><svg class="ic"><use href="#i-list"/></svg>构件列表</button>
          <button type="button" class="tool"><svg class="ic"><use href="#i-pick"/></svg>拾取构件</button>
        </div>
        <div class="tbar">
          <i class="handle"></i>
          <button type="button" class="tool"><svg class="ic"><use href="#i-twopt"/></svg>两点</button>
          <button type="button" class="tool"><svg class="ic"><use href="#i-parallel"/></svg>平行</button>
          <button type="button" class="tool"><svg class="ic"><use href="#i-length"/></svg>长度标注</button>
          <button type="button" class="tool"><svg class="ic"><use href="#i-align"/></svg>对齐标注</button>
          <button type="button" class="tool"><svg class="ic"><use href="#i-measure"/></svg>测量距离</button>
        </div>
      </div>
      <div class="row two">
        <div class="tbar">
          <i class="handle"></i>
          <span class="split"><button type="button" class="tool on"><svg class="ic"><use href="#i-cursor"/></svg>选择</button><svg class="caret"><use href="#caret"/></svg></span>
          <i class="sep"></i>
          <button type="button" class="tool off"><svg class="ic"><use href="#i-point"/></svg>点</button>
          <i class="sep"></i>
          <button type="button" class="tool off drop"><svg class="ic"><use href="#i-smart"/></svg>智能布置<svg class="caret small"><use href="#caret"/></svg></button>
          <button type="button" class="tool off"><svg class="ic"><use href="#i-exact"/></svg>精确布置</button>
          <button type="button" class="tool"><svg class="ic"><use href="#i-pen"/></svg>设置门窗立樘位置</button>
        </div>
        <div class="tbar model">
          <i class="handle"></i>
          <button type="button" class="tool off"><svg class="ic"><use href="#i-extract"/></svg>从模型提取工程量</button>
        </div>
      </div>

      <div class="stage">
        <div class="vbar">
          <i class="hdots"></i>
          <button type="button" aria-label="删除"><svg class="ic"><use href="#v-erase"/></svg></button>
          <i class="hsep"></i>
          <button type="button" aria-label="复制"><svg class="ic"><use href="#v-copy"/></svg></button>
          <button type="button" aria-label="镜像"><svg class="ic"><use href="#v-mirror"/></svg></button>
          <i class="hsep"></i>
          <button type="button" aria-label="移动"><svg class="ic"><use href="#v-move"/></svg></button>
          <button type="button" aria-label="旋转"><svg class="ic"><use href="#v-rotate"/></svg></button>
          <i class="hsep"></i>
          <button type="button"><svg class="ic"><use href="#v-extend"/></svg><span>延伸</span></button>
          <button type="button"><svg class="ic"><use href="#v-trim"/></svg><span>修剪</span></button>
          <i class="hsep"></i>
          <button type="button"><svg class="ic"><use href="#v-break"/></svg><span>打断</span><svg class="side" viewBox="0 0 3 6"><path d="M3 0v6L0 3z" fill="#777"/></svg></button>
          <button type="button"><svg class="ic"><use href="#v-merge"/></svg><span>合并</span></button>
          <button type="button"><svg class="ic"><use href="#v-split"/></svg><span>分割</span></button>
          <i class="hsep"></i>
          <button type="button"><svg class="ic"><use href="#v-align"/></svg><span>对齐</span><svg class="side" viewBox="0 0 3 6"><path d="M3 0v6L0 3z" fill="#777"/></svg></button>
          <button type="button"><svg class="ic"><use href="#v-offset"/></svg><span>偏移</span></button>
          <button type="button"><svg class="ic"><use href="#v-stretch"/></svg><span>拉伸</span></button>
          <i class="hsep"></i>
          <button type="button"><svg class="ic"><use href="#v-grip"/></svg><span>设置夹点</span></button>
          <button type="button" class="more" aria-label="更多"><svg viewBox="0 0 8 9" width="8" height="9"><path d="M1 1l3 2.500L7 1M1 5l3 2.500L7 5" fill="none" stroke="#000" stroke-width="1.500"/></svg></button>
        </div>

        <div class="canvas">
          <svg class="drawing" role="img" aria-label="轴网平面图">
            <g transform="translate(-428 -135)">
              <path d="M860 361.500H1197.500V668.500H860" fill="none" stroke="#fff" stroke-width="7"/>
              <g fill="none" stroke="#f00">
                <path d="M584.500 770.500V259.500M686.500 770.500V259.500M788.500 770.500V259.500M890.500 770.500V259.500M992.500 770.500V259.500"/>
                <path d="M584.500 361.500H1197.500M584.500 668.500H1197.500M584.500 770.500H1197.500"/>
                <path d="M1197.500 259.500V770.500M1095.500 259.500V770.500M584.500 259.500H1197.500M584.500 463.500H1197.500M584.500 565.500H1197.500"/>
              </g>
              <g fill="none" stroke="#080">
                <path d="M482 259.500H584M482 361.500H584M482 463.500H584M482 565.500H584M482 668.500H584M482 770.500H584M532.500 259V771"/>
                <path d="M526 252l14 14M526 354l14 14M526 456l14 14M526 558l14 14M526 661l14 14M526 763l14 14"/>
                <path d="M584.500 771v37M686.500 771v37M788.500 771v37M890.500 771v37M992.500 771v37M1095.500 771v37M1197.500 771v37"/>
                <circle cx="469" cy="259" r="13"/><circle cx="469" cy="361" r="13"/><circle cx="469" cy="463" r="13"/><circle cx="469" cy="566" r="13"/><circle cx="469" cy="668" r="13"/><circle cx="469" cy="770" r="13"/>
                <circle cx="584.500" cy="795" r="13"/><circle cx="686.500" cy="795" r="13"/><circle cx="788.500" cy="795" r="13"/><circle cx="890.500" cy="795" r="13"/><circle cx="992.500" cy="795" r="13"/><circle cx="1095.500" cy="795" r="13"/><circle cx="1197.500" cy="795" r="13"/>
              </g>
              <g class="axis">
                <text x="470" y="264">F</text><text x="470" y="366">E</text><text x="472" y="469">D</text><text x="471" y="571">C</text><text x="471" y="673">B</text><text x="471" y="776">A</text>
                <text x="585" y="800">1</text><text x="687" y="800">2</text><text x="789" y="800">3</text><text x="891" y="800">4</text><text x="993" y="800">5</text><text x="1097" y="800">6</text><text x="1199" y="800">7</text>
                <text transform="translate(533 305) rotate(-90)">3000</text><text transform="translate(533 407) rotate(-90)">3000</text><text transform="translate(533 509) rotate(-90)">3000</text><text transform="translate(533 611) rotate(-90)">3000</text><text transform="translate(533 713) rotate(-90)">3000</text>
              </g>
              <path d="M483 753V714" stroke="#0f0" stroke-width="4"/><path d="M478 716l5-13 5 13z" fill="#0f0"/>
              <path d="M483 753H522" stroke="#f00" stroke-width="4"/><path d="M520 748l13 5-13 5z" fill="#f00"/>
              <circle cx="483" cy="753" r="4" fill="#0a7cff"/>
              <g class="ucs"><text x="497" y="716" fill="#0f0">Y</text><text x="525" y="742" fill="#f00">X</text><text x="474" y="757" fill="#0a7cff">Z</text></g>
            </g>
          </svg>

          <form class="dialog" aria-label="查询图集">
            <div class="dlgcap"><h2>查询图集</h2><button type="button" aria-label="关闭"><svg viewBox="0 0 14 12" width="13" height="11"><path d="M2 1h3l2 3 2-3h3L9 6l3 5H9L7 8l-2 3H2l3-5z" fill="#fff" stroke="#555b6b"/></svg></button></div>
            <div class="client">
              <div class="fields">
                <label for="atlas">图集名称</label>
                <span class="dd"><select id="atlas"><option>05J4-1常用门窗（塑料、铝合金门窗）</option></select><svg class="caret"><use href="#caret"/></svg></span>
                <label for="chapter">图集章节</label>
                <span class="dd"><select id="chapter"><option>MPC 门连平开窗</option></select><svg class="caret"><use href="#caret"/></svg></span>
                <label for="codes">图集代码</label>
                <div class="codes">
                  <select id="codes" size="15">
                    <option selected>MPC1-1521</option><option>MPC2-1521</option><option>MPC1-1821</option><option>MPC2-1821</option><option>MPC1-2121</option><option>MPC2-2121</option><option>MPC1-1524</option><option>MPC2-1524</option><option>MPC1-1824</option><option>MPC2-1824</option><option>MPC1-2124</option><option>MPC2-2124</option><option>MPC1-1527</option><option>MPC2-1527</option><option>MPC1-1827</option>
                  </select>
                  <div class="scroll"><svg class="caret up"><use href="#caret"/></svg><div class="thumb"><i></i></div><svg class="caret"><use href="#caret"/></svg></div>
                </div>
                <label for="q">图集代码查询</label>
                <div class="query"><input id="q" type="text"><button type="button" class="btn">查询</button></div>
              </div>
              <div class="actions"><button type="button" class="btn primary">选择</button><button type="button" class="btn">关闭</button></div>
            </div>
          </form>
        </div>
      </div>

      <div class="row three">
        <div class="tbar off">
          <i class="handle"></i>
          <div class="combos"><span class="combo short"><select aria-label="偏移方式" disabled><option>不偏移</option></select><b><svg class="caret"><use href="#caret"/></svg></b></span></div>
          <i class="sep"></i>
          <label class="num">X=<span><input type="text" value="0" disabled><b><svg class="caret up"><use href="#caret"/></svg><svg class="caret"><use href="#caret"/></svg></b></span>mm</label>
          <label class="num">Y=<span><input type="text" value="0" disabled><b><svg class="caret up"><use href="#caret"/></svg><svg class="caret"><use href="#caret"/></svg></b></span>mm</label>
          <i class="sep"></i>
          <label class="tick"><input type="checkbox">旋转</label>
          <label class="num angle"><span><input type="text" value="0.000" disabled aria-label="角度"><b><svg class="caret up"><use href="#caret"/></svg><svg class="caret"><use href="#caret"/></svg></b></span>°</label>
        </div>
        <div class="tbar off snap">
          <i class="handle"></i>
          <button type="button" class="tool"><svg class="ic"><use href="#s-ortho"/></svg>正交</button>
          <button type="button" class="tool"><svg class="ic"><use href="#s-cross"/></svg>交点</button>
          <button type="button" class="tool"><svg class="ic"><use href="#s-perp"/></svg>垂点</button>
          <button type="button" class="tool"><svg class="ic"><use href="#s-mid"/></svg>中点</button>
          <button type="button" class="tool"><svg class="ic"><use href="#s-vert"/></svg>顶点</button>
          <button type="button" class="tool"><svg class="ic"><use href="#s-coord"/></svg>坐标</button>
        </div>
      </div>
    </section>
  </main>

  <footer class="status">
    <span class="c1"><kbd>X=-4332 Y=17194</kbd></span><span class="c2">层高<kbd>:3m</kbd></span><span class="c3">建筑底标高<kbd>:0m</kbd></span><span class="c4"><kbd>0</kbd></span><span class="c5"></span><span class="c6"></span><span class="c7"><kbd>568.1</kbd></span>
  </footer>

  <svg class="orb" viewBox="0 0 50 50" aria-hidden="true"><circle cx="25" cy="25" r="24" fill="#fff" stroke="#8b9a90"/><circle cx="25" cy="25" r="21" fill="url(#ball)"/></svg>
  <div class="ime">
    <svg width="30" height="26" viewBox="0 0 30 26"><path d="M3 5L24 1q3 0 3 3l2 19q0 3-3 3H8q-3 0-3-3L2 8q0-2 1-3z" fill="#f79061" stroke="#ddd"/><path d="M21 8C15 4 8 7 10 12c2 4 12 1 12 7 0 5-9 6-13 2" fill="none" stroke="#fff" stroke-width="3"/></svg>
    <i></i>
    <strong>中</strong>
    <svg width="14" height="14" viewBox="0 0 14 14"><path d="M9 1c5 4 4 11-2 12-3 0-5-1-6-3 6 1 9-4 8-9z" fill="#3f87d0"/></svg>
    <svg width="12" height="14" viewBox="0 0 12 14"><circle cx="3" cy="4" r="2" fill="none" stroke="#3f87d0" stroke-width="1.500"/><path d="M8 8h3v2l-2 3H8l1-3H8z" fill="#3f87d0"/></svg>
    <svg width="18" height="12" viewBox="0 0 18 12"><rect width="17" height="12" fill="#3f87d0"/><path d="M2 3h13M2 5.500h13" stroke="#fff" stroke-dasharray="1.500 1"/><path d="M3 9h11" stroke="#fff"/></svg>
    <svg width="12" height="14" viewBox="0 0 12 14"><circle cx="6" cy="3.500" r="3" fill="#888"/><path d="M1 10q0-3 3-3h4q3 0 3 3v3q-5 2-10 0z" fill="#888"/></svg>
    <svg width="15" height="15" viewBox="0 0 15 15"><path d="M2 13l7-7" stroke="#3f87d0" stroke-width="3.500"/><path d="M12 1L9 3v3l3 1 3-3c0 4-3 6-6 5L6 6c0-4 3-6 6-5z" fill="#3f87d0"/></svg>
  </div>
</div>
</body>
</html>
```

FILE: styles.css
```css
* { box-sizing: border-box; }

body {
  margin: 0;
  font: 12px/16px "Noto Sans", "Noto Sans CJK SC", sans-serif;
  color: #000;
  background: #f0f0f0;
}

button, input, select { font: inherit; color: inherit; margin: 0; }
button { padding: 0; border: 0; background: none; white-space: nowrap; }
h1, h2 { margin: 0; font-size: 12px; font-weight: 400; }
ul { margin: 0; padding: 0; list-style: none; }
kbd { font: 10px/12px "Liberation Mono", monospace; }

.defs { position: absolute; width: 0; height: 0; }
.ic { width: 16px; height: 16px; flex: none; }
.caret { width: 7px; height: 4px; flex: none; }
.caret.small { height: 3px; }
.caret.up { transform: rotate(180deg); }

.app {
  display: flex;
  flex-direction: column;
  height: 100vh;
  overflow: hidden;
  position: relative;
}

/* title bar */
.titlebar {
  display: flex;
  align-items: center;
  height: 22px;
  flex: none;
  gap: 5px;
  background: linear-gradient(100deg, #e9eef3 0, #dfe6ed 30%, #cbd5df 45%, #cfd9e3 74%, #dbe3ea 78%, #cdd7e1 84%, #d8e0ea 100%);
  border-bottom: 1px solid #5c6066;
}
.logo { width: 16px; height: 16px; }
.titlebar h1 { flex: 1; white-space: nowrap; }
.winbtns {
  display: flex;
  align-self: flex-start;
  height: 18px;
  margin-right: 2px;
  border: 1px solid #8790a0;
  border-top: 0;
  border-radius: 0 0 5px 5px;
}
.winbtns button { width: 27px; display: grid; place-items: center; border-right: 1px solid #8790a0; }
.winbtns .wide { width: 48px; border: 0; }

/* menus */
.menurow {
  display: flex;
  justify-content: space-between;
  height: 27px;
  flex: none;
  background: linear-gradient(#fff 0, #e9edf7 32%, #d3daed 36%, #d5dcee 100%);
}
.menubar {
  display: flex;
  align-items: center;
  gap: 11px;
  padding: 2px 5px 0 0;
  border-right: 1px solid #c4c9d6;
  border-bottom: 1px solid #e8ecf5;
  color: #6e6e6e;
}
.menubar .tool { margin-left: -2px; }
.menubar.login { color: #000; border-left: 1px solid #fff; padding-right: 6px; }

.handle {
  width: 3px;
  height: 22px;
  flex: none;
  background: repeating-linear-gradient(#b9bcc4 0 2px, transparent 2px 4px);
}

/* tool bars */
.toolrow {
  display: flex;
  height: 30px;
  flex: none;
  padding-bottom: 1px;
  background: linear-gradient(#d3daed, #e2e9f8);
  border-bottom: 1px solid #f8f8f8;
}
.tbar {
  display: flex;
  align-items: center;
  gap: 7px;
  padding: 0 5px 0 0;
  border: 1px solid #cfcfcf;
  border-left-color: #fff;
  border-top-color: #fff;
}
.toolrow .tbar { border-color: #eef1fa #c6cbda #c6cbda transparent; }
.toolrow .files { padding-right: 4px; }
.calc { margin-left: 13px; }
.views { margin-left: 19px; }

.tool { display: flex; align-items: center; gap: 4px; height: 20px; flex: none; }
.tool .caret { margin-left: -1px; }
.tool.drop { margin-right: -3px; }
.off { color: #777; }
.tool.on {
  padding: 0 2px;
  margin: 0 -3px;
  height: 21px;
  border: 1px solid #444;
  border-radius: 3px;
  background: linear-gradient(#dcdcdc, #ececec);
}
.split { display: flex; align-items: center; }
.split .tool { margin-right: 1px; }
.split .caret { margin-right: -5px; }
.sep { width: 1px; height: 21px; margin: 0 -1px; background: #777; flex: none; }
.sep.light { background: #a9aebb; }

.combos { display: flex; gap: 5px; margin: 0 -2px 0 -3px; }
.combo { display: flex; width: 67px; height: 21px; background: #fff; }
.combo.short { width: 57px; }
.combo.layer { width: 71px; }
.combo.floor { width: 81px; }
.combo select {
  flex: 1;
  min-width: 0;
  appearance: none;
  border: 0;
  padding: 0 0 0 2px;
  background: none;
}
.combo b {
  width: 13px;
  display: grid;
  place-items: center;
  border: 1px solid #707070;
  background: linear-gradient(#f4f4f4, #cfcfcf);
}

/* panes */
.body { display: flex; flex: 1; min-height: 0; }
.navpane, .listpane { display: flex; flex-direction: column; flex: none; }
.navpane { width: 199px; margin-right: 5px; }
.listpane { width: 194px; margin-right: 4px; }

.cap {
  display: flex;
  align-items: center;
  gap: 8px;
  height: 17px;
  flex: none;
  padding-right: 4px;
  border: 1px solid #8a8a8a;
  border-left: 0;
}
.cap h2 { flex: 1; font-size: 13px; line-height: 14px; padding-bottom: 2px; }
.cap button { width: 10px; height: 10px; display: grid; }
.cap svg { width: 10px; height: 10px; }
.cap.active { background: #0054e3; border-color: #0054e3; color: #fff; }

.section {
  height: 22px;
  flex: none;
  padding-top: 2px;
  border: 1px solid #a0a0a0;
  border-top: 0;
  background: linear-gradient(#fafafa, #f0f0f0 3px);
}
.treebar {
  display: flex;
  align-items: center;
  gap: 8px;
  height: 28px;
  flex: none;
  padding: 2px 0 0 7px;
  border-left: 1px solid #a0a0a0;
  border-right: 1px solid #a0a0a0;
  background: linear-gradient(#fff, #dfe5f5 38%, #d3daed 44%, #e2e9f8);
}
.treebar .ic { display: block; width: 15px; height: 15px; }

.tree {
  flex: 1;
  min-height: 0;
  overflow: hidden;
  padding-top: 1px;
  background: #fff;
  border: 1px solid #6f7682;
  border-left-width: 2px;
}
.node { display: flex; align-items: center; height: 16px; padding-left: 10px; }
.tw { width: 8px; height: 8px; margin-right: 6px; }
.fd { width: 16px; height: 14px; margin-right: 5px; }
.tree ul { padding-left: 13px; background: repeating-linear-gradient(#888 0 1px, transparent 1px 2px) 13px 0 / 1px 100% no-repeat; }
.tree ul li {
  display: flex;
  align-items: center;
  height: 16px;
  padding-left: 30px;
  background:
    repeating-linear-gradient(#888 0 1px, transparent 1px 2px) 19px 0 / 1px 100% no-repeat,
    repeating-linear-gradient(90deg, #888 0 1px, transparent 1px 2px) 19px 8px / 11px 1px no-repeat;
}
.tree ul li:last-child {
  background:
    repeating-linear-gradient(#888 0 1px, transparent 1px 2px) 19px 0 / 1px 8px no-repeat,
    repeating-linear-gradient(90deg, #888 0 1px, transparent 1px 2px) 19px 8px / 11px 1px no-repeat;
}
.tree ul span { padding: 0 4px; line-height: 14px; }
.picked span { border: 1px solid #d8d8d8; border-left: 0; border-radius: 0 3px 3px 0; background: linear-gradient(#fafafa, #e8e8e8); }

.listbar {
  display: flex;
  align-items: center;
  gap: 7px;
  height: 27px;
  flex: none;
  padding-left: 5px;
  background: linear-gradient(#fff, #e4e9f6 38%, #d3daed 42%, #e2e9f8);
}
.search { display: flex; height: 24px; flex: none; margin: 1px 0 2px 1px; }
.search input { flex: 1; min-width: 0; padding: 0 3px 2px; border: 1px solid #cdd5e2; background: #fff; }
.search input::placeholder { color: #777; opacity: 1; }
.search button { width: 25px; display: grid; place-items: center; background: #f4f8fd; }
.listbox {
  height: 312px;
  flex: none;
  margin-bottom: 6px;
  background: #fff;
  border: 1px solid #8f9299;
  border-width: 1px 2px;
}
.listbox table { width: 100%; border-collapse: collapse; }
.listbox th {
  height: 22px;
  padding: 0 3px 0 0;
  font-weight: 400;
  border: 1px solid #b5b5b5;
  border-top: 0;
  border-left: 0;
  background: linear-gradient(#fff, #eee);
}
.listbox .idx { width: 27px; }
.props { flex: 1; background: #fff; border: 2px solid #9a9da3; border-top-width: 1px; margin-top: 1px; }

/* work area */
.work { display: flex; flex-direction: column; flex: 1; min-width: 0; }
.row { display: flex; flex: none; }
.one { height: 29px; }
.two { height: 27px; justify-content: space-between; }
.model { margin-right: 100px; }
.stage { display: flex; flex: 1; min-height: 0; }

.vbar {
  display: flex;
  flex-direction: column;
  align-items: center;
  gap: 7px;
  width: 26px;
  flex: none;
  padding: 3px 0 2px;
  overflow: hidden;
}
.vbar button { display: flex; flex-direction: column; align-items: center; gap: 3px; color: #777; flex: none; }
.vbar span { width: 12px; font-size: 12px; line-height: 12px; white-space: normal; word-break: break-all; }
.hdots { width: 24px; height: 2px; margin-bottom: -2px; background: repeating-linear-gradient(90deg, #a9acb4 0 2px, transparent 2px 4px); }
.hsep { width: 19px; height: 1px; margin: -2px 0 -1px; background: #888; flex: none; }
.side { width: 3px; height: 6px; margin-top: -1px; }
.vbar .more { margin: auto 4px 1px auto; }

.canvas { flex: 1; min-width: 0; position: relative; background: #000; margin-right: 1px; }
.drawing { display: block; width: 100%; height: 100%; }
.axis text { font: 17px "Noto Sans", sans-serif; fill: #e6e6e6; text-anchor: middle; }
.ucs text { font: 300 13px "Noto Sans", sans-serif; text-anchor: middle; }

/* atlas dialog */
.dialog {
  position: absolute;
  left: 149px;
  top: 87px;
  width: 284px;
  padding: 0 6px 7px;
  border: 1px solid #5f6873;
  border-radius: 7px;
  background: linear-gradient(#dbe3ec, #d0dae5 8%, #dde6ee 40%, #c5d1de 50%, #d8e1ea);
}
.dlgcap { display: flex; justify-content: space-between; height: 27px; }
.dlgcap h2 { padding-top: 5px; }
.dlgcap button {
  width: 47px;
  height: 18px;
  display: grid;
  place-items: center;
  border: 1px solid #8790a0;
  border-top: 0;
  border-radius: 0 0 4px 4px;
}
.client { border: 1px solid #6e747d; background: #f0f0f0; font-family: "Noto Sans CJK SC", sans-serif; }
.fields { display: flex; flex-direction: column; padding: 7px 3px 0 12px; height: 378px; }
.fields label { height: 16px; }
.dd {
  display: flex;
  align-items: center;
  width: 249px;
  height: 20px;
  margin: 3px 0 5px;
  padding-right: 5px;
  border: 1px solid #707070;
  border-radius: 3px;
  background: linear-gradient(#f4f4f4, #ebebeb 50%, #dcdcdc 52%, #cfcfcf);
}
.dd select { flex: 1; min-width: 0; appearance: none; border: 0; padding: 0 2px; background: none; }
.codes {
  display: flex;
  width: 244px;
  height: 183px;
  margin: 8px 0 7px 1px;
  border: 1px solid #828790;
  background: #fff;
}
.codes select {
  flex: 1;
  appearance: none;
  border: 0;
  padding: 1px;
  outline: 0;
  overflow: hidden;
  scrollbar-width: none;
  background: #fff;
  font: 10px/12px "Liberation Mono", monospace;
}
.codes option { height: 12px; min-height: 12px; padding: 0 2px; font: 10px/12px "Liberation Mono", monospace; }
.codes option:checked { background: linear-gradient(#39f, #39f); color: #fff; }
.scroll { display: flex; flex-direction: column; align-items: center; width: 17px; padding: 7px 0; background: #f1f1f1; }
.thumb {
  width: 15px;
  height: 111px;
  margin: 8px 0 auto;
  display: grid;
  place-items: center;
  border: 1px solid #979797;
  border-radius: 2px;
  background: linear-gradient(90deg, #f5f5f5, #e4e4e4 50%, #c8c8c8);
}
.thumb i { width: 7px; height: 8px; background: repeating-linear-gradient(#555 0 1px, transparent 1px 3px); }
.query { display: flex; justify-content: space-between; }
.query input { width: 184px; height: 20px; margin-top: 2px; border: 1px solid #dadde4; border-top-color: #abadb3; border-radius: 2px; background: #fff; }
.btn {
  height: 23px;
  width: 78px;
  border: 1px solid #707070;
  border-radius: 3px;
  background: linear-gradient(#f3f3f3, #ebebeb 50%, #dcdcdc 52%, #cfcfcf);
}
.query .btn { width: 60px; margin-right: -1px; }
.btn.primary { border: 2px solid #2fb4e4; background: linear-gradient(#eaf6fd, #d9f0fc 50%, #bee6fd 52%, #a9dbf5); }
.actions { display: flex; gap: 26px; padding: 9px 0 9px 65px; border-top: 1px solid #a0a0a0; }

/* lower tool bars */
.three { height: 29px; }
.three .combo { background: #f4f4f4; }
.three .combo b { border-color: #aaa; background: #f4f4f4; }
.three select:disabled { color: #777; opacity: 1; }
.num { display: flex; align-items: center; gap: 3px; margin: 0 -1px 0 -2px; }
.num > span { display: flex; height: 21px; border: 1px solid #fff; }
.num input { width: 42px; border: 0; padding: 0 4px; text-align: right; background: none; }
.num.angle { margin-left: 0; }
.angle input { width: 50px; }
.num b { width: 13px; display: flex; flex-direction: column; justify-content: space-evenly; align-items: center; border: 1px solid #bbb; background: linear-gradient(#f4f4f4 45%, #bbb 45% 52%, #f4f4f4 52%); }
.num b .caret { width: 5px; height: 3px; }
.tick { display: flex; align-items: center; gap: 6px; margin-left: -3px; color: #000; }
.tick input { appearance: none; width: 13px; height: 13px; border: 1px solid #808080; background: linear-gradient(135deg, #cdd2d8, #fff); box-shadow: inset 0 0 0 1px #f4f4f4; }
.snap { margin-left: 64px; }

/* status */
.status {
  display: flex;
  height: 19px;
  flex: none;
  background: #f0eded;
  border-top: 1px solid #888;
  font-family: "Noto Sans CJK SC", sans-serif;
  white-space: nowrap;
}
.status span { padding: 2px 0 0 2px; line-height: 16px; border-right: 1px solid #ccc; flex: none; overflow: hidden; }
.status .c1 { width: 149px; padding-left: 1px; }
.c2 { width: 80px; }
.c3 { width: 130px; }
.c4 { width: 51px; }
.c5 { width: 250px; }
.status .c6 { flex: 1; }
.status .c7 { width: 221px; border: 0; padding-left: 1px; }

/* input method bar floats over the window corner */
.orb { position: absolute; right: -31px; bottom: -5px; width: 50px; height: 50px; }
.ime {
  position: absolute;
  right: 2px;
  bottom: 0;
  display: flex;
  align-items: center;
  gap: 8px;
  width: 190px;
  height: 25px;
  padding: 0 8px;
  border: 1px solid #ddd;
  border-bottom: 0;
  border-radius: 8px 8px 0 0;
  background: #fbfbfb;
}
.ime svg { flex: none; }
.ime i { width: 1px; height: 24px; background: #f0caca; }
.ime strong { font: 700 15px/20px "Noto Sans CJK SC", sans-serif; color: #3f87d0; }
```
